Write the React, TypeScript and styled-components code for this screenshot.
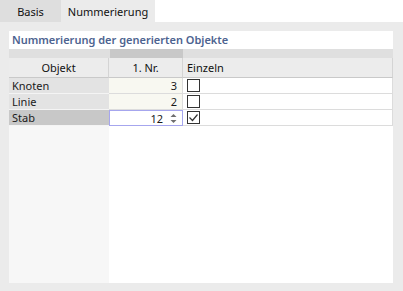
import { Fragment } from "react";
import styled, { createGlobalStyle } from "styled-components";

const GlobalStyle = createGlobalStyle`
  html, body {
    margin: 0;
    padding: 0;
    background: #ebebeb;
    font-family: "Noto Sans", "Open Sans", Arial, sans-serif;
    font-size: 11px;
    color: #1a1a1a;
  }
`;

const Page = styled.div`
  width: 403px;
  height: 291px;
  display: flex;
  flex-direction: column;
`;

const TabBar = styled.div`
  display: flex;
  height: 22px;
  background: #ffffff;
`;

const Tab = styled.div<{ $active?: boolean }>`
  display: flex;
  align-items: center;
  justify-content: center;
  width: ${(p) => (p.$active ? "94px" : "61px")};
  background: ${(p) => (p.$active ? "#ebebeb" : "#dedede")};
  color: #111;
`;

const Content = styled.div`
  flex: 1;
  padding: 9px 10px 8px 9px;
  display: flex;
`;

const Panel = styled.div`
  flex: 1;
  background: #ffffff;
  display: flex;
  flex-direction: column;
`;

const Title = styled.div`
  height: 18px;
  line-height: 18px;
  padding-left: 3px;
  font-weight: 600;
  color: #4d6390;
`;

const Table = styled.div`
  flex: 1;
  display: grid;
  grid-template-columns: 100px 74px 1fr;
  grid-template-rows: 9px 20px 16px 16px 16px 1fr;
`;

const Band = styled.div<{ $dark?: boolean }>`
  background: ${(p) => (p.$dark ? "#c8c8c8" : "#dfdfdf")};
  border-left: ${(p) => (p.$dark ? "1px solid #dfdfdf" : "none")};
`;

const HeadCell = styled.div<{ $align?: string }>`
  background: #ececec;
  border-bottom: 1px solid #c9c9c9;
  border-right: 1px solid #d4d4d4;
  display: flex;
  align-items: center;
  justify-content: ${(p) => p.$align || "center"};
  padding: 0 4px;
  color: #111;
`;

const RowLabel = styled.div<{ $selected?: boolean }>`
  background: ${(p) => (p.$selected ? "#c8c8c8" : "#e3e3e3")};
  border-bottom: 1px solid #f4f4f4;
  display: flex;
  align-items: center;
  padding-left: 3px;
`;

const NumCell = styled.div`
  background: #f8f8f1;
  border-bottom: 1px solid #dcdcdc;
  border-right: 1px solid #dcdcdc;
  display: flex;
  align-items: center;
  justify-content: flex-end;
  padding-right: 5px;
`;

const EditCell = styled.div`
  background: #ffffff;
  border: 1px solid #a6a6ee;
  display: flex;
  align-items: center;
  justify-content: flex-end;
  gap: 7px;
  padding-right: 5px;
`;

const CheckCell = styled.div`
  background: #ffffff;
  border-bottom: 1px solid #dcdcdc;
  border-right: 1px solid #dcdcdc;
  display: flex;
  align-items: center;
  padding-left: 4px;
`;

const Box = styled.div`
  width: 11px;
  height: 11px;
  border: 1px solid #333;
  background: #fff;
  display: flex;
  align-items: center;
  justify-content: center;
`;

const LeftFill = styled.div`
  background: #f7f7f7;
`;

const RightFill = styled.div`
  grid-column: span 2;
  background: #ffffff;
`;

function Spinner() {
  return (
    <svg width="7" height="11" viewBox="0 0 7 11">
      <path d="M0.5 4 L3.5 1 L6.5 4 Z" fill="#6e6e6e" />
      <path d="M0.5 7 L3.5 10 L6.5 7 Z" fill="#6e6e6e" />
    </svg>
  );
}

function Check({ checked }: { checked: boolean }) {
  return (
    <Box>
      {checked && (
        <svg width="11" height="11" viewBox="0 0 11 11">
          <polyline
            points="1.5,5.5 4.5,8.5 9.5,2.5"
            fill="none"
            stroke="#333"
            strokeWidth="1.2"
          />
        </svg>
      )}
    </Box>
  );
}

const rows = [
  { name: "Knoten", nr: 3, single: false },
  { name: "Linie", nr: 2, single: false },
  { name: "Stab", nr: 12, single: true, selected: true },
];

export default function App() {
  return (
    <Page>
      <GlobalStyle />
      <TabBar>
        <Tab>Basis</Tab>
        <Tab $active>Nummerierung</Tab>
      </TabBar>
      <Content>
        <Panel>
          <Title>Nummerierung der generierten Objekte</Title>
          <Table>
            <Band />
            <Band $dark />
            <Band />
            <HeadCell>Objekt</HeadCell>
            <HeadCell>1. Nr.</HeadCell>
            <HeadCell $align="flex-start">Einzeln</HeadCell>
            {rows.map((r) => (
              <Fragment key={r.name}>
                <RowLabel $selected={r.selected}>{r.name}</RowLabel>
                {r.selected ? (
                  <EditCell>
                    {r.nr}
                    <Spinner />
                  </EditCell>
                ) : (
                  <NumCell>{r.nr}</NumCell>
                )}
                <CheckCell>
                  <Check checked={r.single} />
                </CheckCell>
              </Fragment>
            ))}
            <LeftFill />
            <RightFill />
          </Table>
        </Panel>
      </Content>
    </Page>
  );
}
